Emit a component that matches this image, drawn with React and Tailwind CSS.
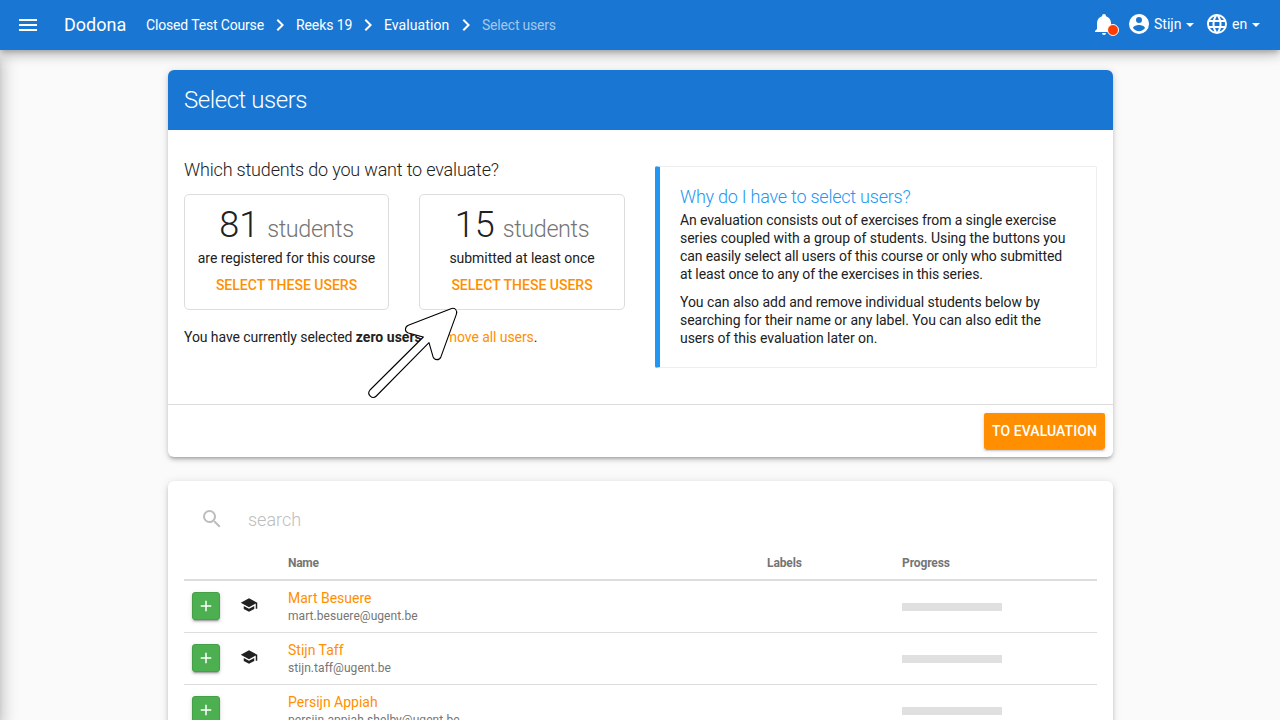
import React from "react";

const ICONS = {
  menu: "M3,6H21V8H3V6M3,11H21V13H3V11M3,16H21V18H3V16Z",
  chevron: "M8.59,16.58L13.17,12L8.59,7.41L10,6L16,12L10,18L8.59,16.58Z",
  bell: "M21,19V20H3V19L5,17V11C5,7.9 7.03,5.17 10,4.29C10,4.19 10,4.1 10,4A2,2 0 0,1 12,2A2,2 0 0,1 14,4C14,4.1 14,4.19 14,4.29C16.97,5.17 19,7.9 19,11V17L21,19M14,21A2,2 0 0,1 12,23A2,2 0 0,1 10,21",
  account:
    "M12,19.2C9.5,19.2 7.29,17.92 6,16C6.03,14 10,12.9 12,12.9C14,12.9 17.97,14 18,16C16.71,17.92 14.5,19.2 12,19.2M12,5A3,3 0 0,1 15,8A3,3 0 0,1 12,11A3,3 0 0,1 9,8A3,3 0 0,1 12,5M12,2A10,10 0 0,0 2,12A10,10 0 0,0 12,22A10,10 0 0,0 22,12C22,6.47 17.5,2 12,2Z",
  web: "M16.36,14C16.44,13.34 16.5,12.68 16.5,12C16.5,11.32 16.44,10.66 16.36,10H19.74C19.9,10.64 20,11.31 20,12C20,12.69 19.9,13.36 19.74,14M14.59,19.56C15.19,18.45 15.65,17.25 15.97,16H18.92C17.96,17.65 16.43,18.93 14.59,19.56M14.34,14H9.66C9.56,13.34 9.5,12.68 9.5,12C9.5,11.32 9.56,10.65 9.66,10H14.34C14.43,10.65 14.5,11.32 14.5,12C14.5,12.68 14.43,13.34 14.34,14M12,19.96C11.17,18.76 10.5,17.43 10.09,16H13.91C13.5,17.43 12.83,18.76 12,19.96M8,8H5.08C6.03,6.34 7.57,5.06 9.4,4.44C8.8,5.55 8.35,6.75 8,8M5.08,16H8C8.35,17.25 8.8,18.45 9.4,19.56C7.57,18.93 6.03,17.65 5.08,16M4.26,14C4.1,13.36 4,12.69 4,12C4,11.31 4.1,10.64 4.26,10H7.64C7.56,10.66 7.5,11.32 7.5,12C7.5,12.68 7.56,13.34 7.64,14M12,4.03C12.83,5.23 13.5,6.57 13.91,8H10.09C10.5,6.57 11.17,5.23 12,4.03M18.92,8H15.97C15.65,6.75 15.19,5.55 14.59,4.44C16.43,5.07 17.96,6.34 18.92,8M12,2C6.47,2 2,6.5 2,12A10,10 0 0,0 12,22A10,10 0 0,0 22,12A10,10 0 0,0 12,2Z",
  magnify:
    "M9.5,3A6.5,6.5 0 0,1 16,9.5C16,11.11 15.41,12.59 14.44,13.73L14.71,14H15.5L20.5,19L19,20.5L14,15.5V14.71L13.73,14.44C12.59,15.41 11.11,16 9.5,16A6.5,6.5 0 0,1 3,9.5A6.5,6.5 0 0,1 9.5,3M9.5,5C7,5 5,7 5,9.5C5,12 7,14 9.5,14C12,14 14,12 14,9.5C14,7 12,5 9.5,5Z",
  plus: "M19,13H13V19H11V13H5V11H11V5H13V11H19V13Z",
  school:
    "M12,3L1,9L12,15L21,10.09V17H23V9M5,13.18V17.18L12,21L19,17.18V13.18L12,17L5,13.18Z",
};

function Icon({ name, className = "size-6" }) {
  return (
    <svg viewBox="0 0 24 24" fill="currentColor" className={`shrink-0 ${className}`}>
      <path d={ICONS[name]} />
    </svg>
  );
}

function Caret() {
  return <span className="ml-[5px] mt-[2px] size-0 border-x-4 border-t-4 border-x-transparent border-t-white" />;
}

function Navbar() {
  return (
    <header className="relative z-20 flex h-[50px] items-center bg-[#1976d2] px-4 text-white shadow-[0_3px_5px_-1px_rgba(0,0,0,0.2),0_6px_10px_0_rgba(0,0,0,0.14),0_1px_18px_0_rgba(0,0,0,0.12)]">
      <Icon name="menu" />
      <span className="ml-6 w-[82px] text-lg leading-6">Dodona</span>
      <nav className="flex items-center gap-1">
        <span className="w-[118px] whitespace-nowrap tracking-[-0.16px]">Closed Test Course</span>
        <Icon name="chevron" />
        <span className="w-14 whitespace-nowrap tracking-[-0.1px]">Reeks 19</span>
        <Icon name="chevron" />
        <span className="w-[66px] whitespace-nowrap tracking-[0.08px]">Evaluation</span>
        <Icon name="chevron" />
        <span className="tracking-[-0.2px] text-white/60">Select users</span>
      </nav>
      <div className="mb-[2px] ml-auto flex items-center pr-1">
        <div className="relative">
          <Icon name="bell" />
          <span className="absolute left-[15px] top-3 size-3 rounded-full border border-white bg-[#ff3d00]" />
        </div>
        <div className="ml-[11px] flex items-center">
          <Icon name="account" />
          <span className="ml-[3px] w-[27px]">Stijn</span>
          <Caret />
        </div>
        <div className="ml-[11px] flex items-center">
          <Icon name="web" />
          <span className="ml-[3px] w-[15px]">en</span>
          <Caret />
        </div>
      </div>
    </header>
  );
}

function CountBox({ count, text }) {
  return (
    <div className="flex h-[116px] flex-col items-center rounded-[5px] border border-[#dddddd]">
      <div className="mt-2 flex h-[44px] items-baseline whitespace-pre text-[36px] font-light leading-[44px]">
        {count}
        <span className="ml-2 text-[23.4px] font-light tracking-[-0.4px] text-[#757575]">students</span>
      </div>
      <div className="mt-[2px] tracking-[-0.05px]">{text}</div>
      <div className="mt-[9px] font-medium text-[#ff8f00]">SELECT THESE USERS</div>
    </div>
  );
}

function Pointer() {
  return (
    <svg viewBox="0 360 300 300" className="absolute left-[192px] top-[230px] size-[100px]">
      <path
        d="M145 436 L273 386 C285 382 293 391 289 403 L243 530 C238 542 223 542 219 530 L207 488 L49 648 C37 660 19 643 30 630 L190 471 L145 459 C133 455 134 441 145 436 Z"
        fill="white"
        stroke="black"
        strokeWidth="3.3"
        strokeLinejoin="round"
      />
    </svg>
  );
}

const CARD =
  "rounded-md bg-white shadow-[0_3px_3px_-2px_rgba(0,0,0,0.2),0_3px_4px_0_rgba(0,0,0,0.14),0_1px_8px_0_rgba(0,0,0,0.12)]";

function SelectCard() {
  return (
    <section className={`relative h-[387px] ${CARD}`}>
      <h2 className="flex h-[60px] items-center rounded-t-md bg-[#1976d2] px-4 text-2xl font-light tracking-[-0.45px] text-white">
        Select users
      </h2>
      <div className="grid h-[274px] grid-cols-[441px_442px] gap-[30px] px-4">
        <div className="pt-[29px]">
          <h4 className="text-lg font-light leading-[22px] tracking-[-0.18px]">
            Which students do you want to evaluate?
          </h4>
          <div className="mt-[13px] grid grid-cols-[205px_206px] gap-[30px]">
            <CountBox count="81" text="are registered for this course" />
            <CountBox count="15" text="submitted at least once" />
          </div>
          <p className="mt-[18px] tracking-[-0.07px]">
            You have currently selected <b className="font-bold tracking-[0.02px]">zero users</b>.{" "}
            <span className="text-[#ff8f00]">Remove all users</span>.
          </p>
        </div>
        <div className="mt-9 h-[202px] rounded-[2px] border border-l-[5px] border-[#eeeeee] border-l-[#2196f3] px-5 pt-[19px]">
          <h4 className="text-lg font-light leading-[22px] tracking-[-0.23px] text-[#2196f3]">
            Why do I have to select users?
          </h4>
          <p className="mt-[3px] tracking-[-0.11px]">
            An evaluation consists out of exercises from a single exercise
            <br />
            <span className="tracking-[-0.03px]">series coupled with a group of students. Using the buttons you</span>
            <br />
            <span className="tracking-[-0.1px]">can easily select all users of this course or only who submitted</span>
            <br />
            at least once to any of the exercises in this series.
          </p>
          <p className="mt-[10px] tracking-[-0.04px]">
            You can also add and remove individual students below by
            <br />
            searching for their name or any label. You can also edit the
            <br />
            users of this evaluation later on.
          </p>
        </div>
      </div>
      <div className="flex h-[53px] justify-end border-t border-[#dddddd] p-2">
        <button className="h-9 w-[121px] whitespace-nowrap rounded-[2px] bg-[#ff8f00] px-2 font-medium tracking-[0.08px] text-white shadow-[0_2px_2px_0_rgba(0,0,0,0.14),0_3px_1px_-2px_rgba(0,0,0,0.2),0_1px_5px_0_rgba(0,0,0,0.12)]">
          TO EVALUATION
        </button>
      </div>
      <Pointer />
    </section>
  );
}

const USERS = [
  { name: "Mart Besuere", email: "mart.besuere@ugent.be", staff: true },
  { name: "Stijn Taff", email: "stijn.taff@ugent.be", staff: true },
  { name: "Persijn Appiah", email: "persijn.appiah.shelby@ugent.be", staff: false },
];

const COLUMNS = "grid grid-cols-[48px_48px_479px_135px_1fr]";

function UsersCard() {
  return (
    <section className={`mt-6 h-[420px] px-4 pt-4 ${CARD}`}>
      <div className="flex h-[46px] items-center pl-4 text-[#bdbdbd]">
        <Icon name="magnify" className="mb-[2px] size-6" />
        <span className="ml-6 text-lg font-light">search</span>
      </div>
      <div className={`${COLUMNS} h-[38px] items-center border-b-2 border-[#dddddd] pt-1 text-xs font-bold tracking-[-0.1px] text-[#757575]`}>
        <span className="col-start-3 pl-2 tracking-[-0.3px]">Name</span>
        <span className="pl-2">Labels</span>
        <span className="pl-2">Progress</span>
      </div>
      {USERS.map((user) => (
        <div key={user.email} className={`${COLUMNS} h-[52px] items-center border-b border-[#dddddd]`}>
          <span className="mb-px ml-2 flex size-7 items-center justify-center rounded-[3px] border border-[#43a047] bg-[#4caf50] text-white shadow-[0_2px_2px_0_rgba(0,0,0,0.14),0_3px_1px_-2px_rgba(0,0,0,0.2),0_1px_5px_0_rgba(0,0,0,0.12)]">
            <Icon name="plus" className="size-[18px]" />
          </span>
          <span className="ml-2 pb-[3px] text-[#212121]">
            {user.staff && <Icon name="school" className="size-[18px]" />}
          </span>
          <div className="pl-2">
            <div className="text-[#ff8f00]">{user.name}</div>
            <div className="text-xs leading-[18px] tracking-[0.06px] text-[#757575]">{user.email}</div>
          </div>
          <span className="col-start-5 ml-2 mt-px h-2 w-[100px] bg-[#e0e0e0]" />
        </div>
      ))}
    </section>
  );
}

export default function App() {
  return (
    <div className="relative h-[720px] w-[1280px] overflow-hidden bg-[#fafafa] font-['Roboto',sans-serif] text-sm leading-[18px] text-[#212121]">
      <Navbar />
      <div className="absolute -left-[256px] top-[50px] h-[670px] w-[256px] shadow-[0_6px_6px_-3px_rgba(0,0,0,0.2),0_10px_14px_1px_rgba(0,0,0,0.14),0_4px_18px_3px_rgba(0,0,0,0.12)]" />
      <main className="ml-[168px] w-[945px] pt-5">
        <SelectCard />
        <UsersCard />
      </main>
    </div>
  );
}
